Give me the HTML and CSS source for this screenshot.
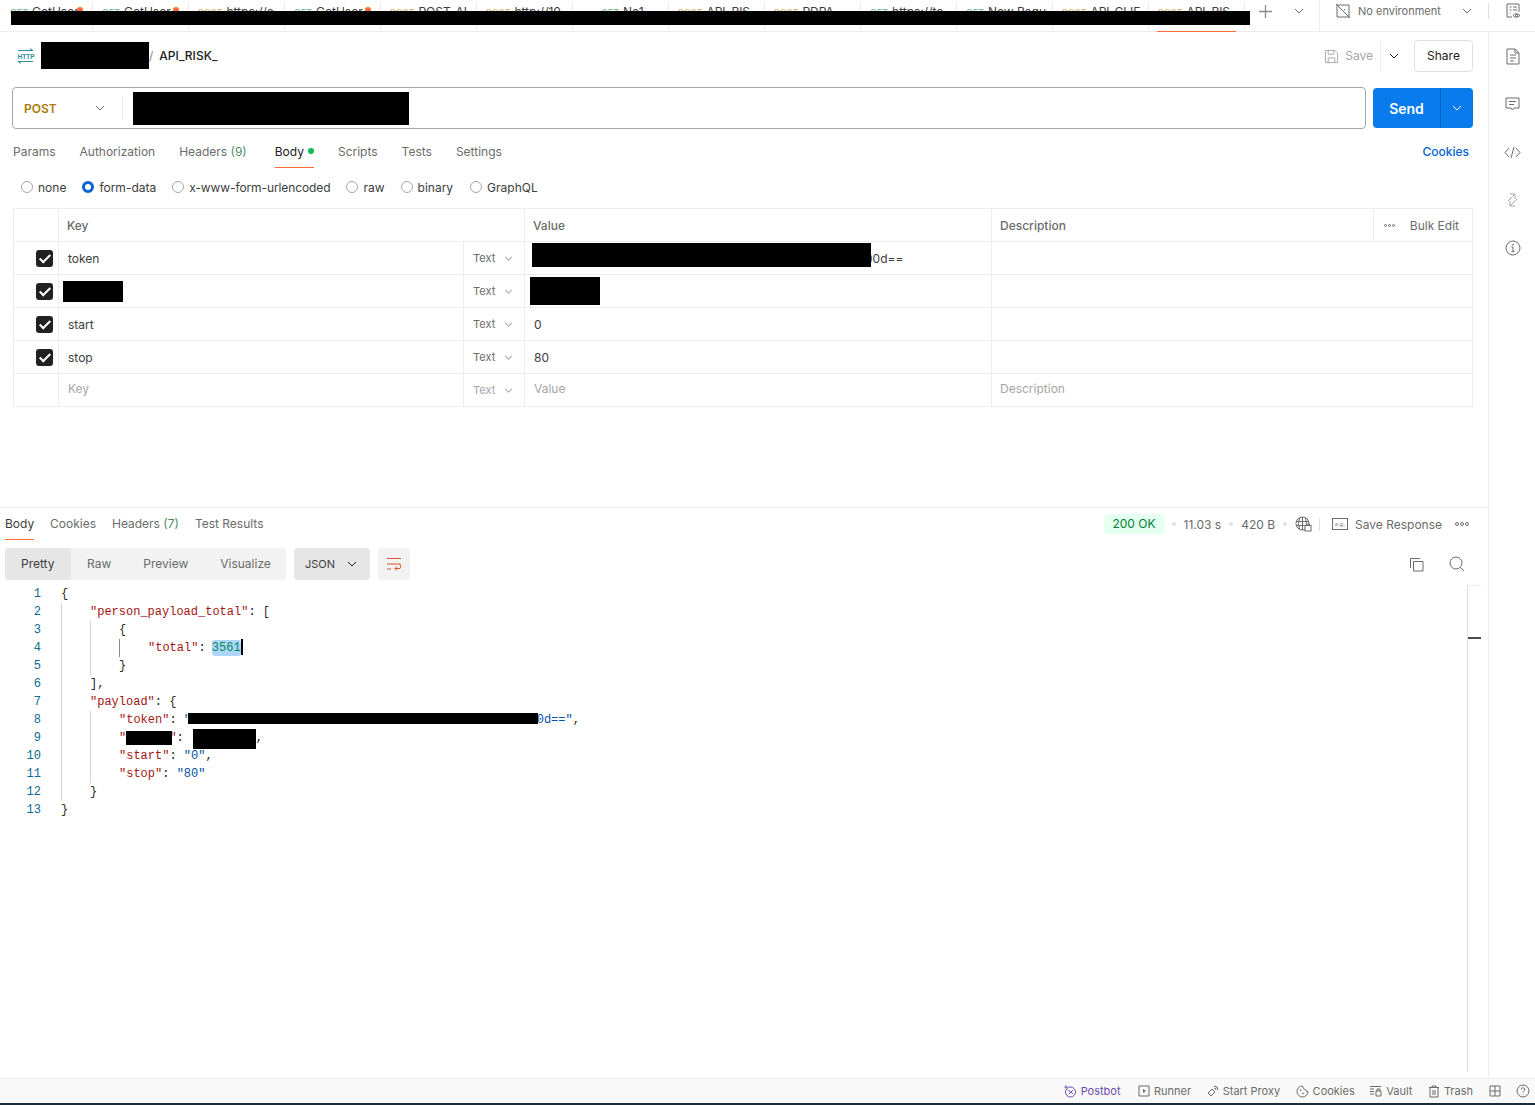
FILE: index.html
```html
<!DOCTYPE html>
<html lang="en">
<head>
    <meta charset="UTF-8">
    <meta name="viewport" content="width=device-width, initial-scale=1.0">
    <title>API_RISK_</title>
    <link rel="stylesheet" href="styles.css">
</head>
<body>
    <div class="topbar">
        <div class="tabs">
            <div class="tab first"><span class="m get">GET</span>GetUser<i class="dot"></i></div>
            <div class="tab"><span class="m get">GET</span>GetUser<i class="dot"></i></div>
            <div class="tab"><span class="m post">POST</span>https://e</div>
            <div class="tab"><span class="m get">GET</span>GetUser<i class="dot"></i></div>
            <div class="tab"><span class="m post">POST</span>POST_AI</div>
            <div class="tab"><span class="m post">POST</span>http://10</div>
            <div class="tab short"><span class="m get">GET</span>No1</div>
            <div class="tab"><span class="m post">POST</span>API_RIS</div>
            <div class="tab"><span class="m post">POST</span>PDPA ...</div>
            <div class="tab"><span class="m get">GET</span>https://tc</div>
            <div class="tab"><span class="m get">GET</span>New Requ</div>
            <div class="tab"><span class="m post">POST</span>API_CLIE</div>
            <div class="tab active"><span class="m post">POST</span>API_RIS</div>
        </div>
        <div class="tab-actions">
            <svg class="plus" width="13" height="13" viewBox="0 0 13 13"><path d="M6.500 0v13M0 6.500h13"/></svg>
            <svg class="chev" width="10" height="6" viewBox="0 0 10 6"><path d="M1 1l4 4 4-4"/></svg>
        </div>
        <div class="env">
            <svg class="ico" width="16" height="16" viewBox="0 0 16 16"><path d="M2 2h12v12H2zM1 1l14 14M6 6l4 4M10 6l-1 1"/></svg>
            <span class="env-name">No environment</span>
            <svg class="chev" width="10" height="6" viewBox="0 0 10 6"><path d="M1 1l4 4 4-4"/></svg>
        </div>
        <div class="env-eye">
            <svg class="ico" width="16" height="16" viewBox="0 0 16 16"><path d="M2 1h12v8M2 1v13h5M4.500 4h2M8 4h4M4.500 7h2M8 7h4M4.500 10h1"/><path d="M8 12.500q3-3.500 7 0q-4 3.500-7 0z"/><circle cx="11.500" cy="12.500" r="1"/></svg>
        </div>
    </div>

    <div class="app">
        <main class="workspace">
            <section class="request">
                <div class="title-row">
                    <div class="crumb">
                        <svg class="http-icon" width="18" height="16" viewBox="0 0 18 16"><path d="M1 2.500h15M13 .5l3 2M1 13.500h15M1 13.500l3 2"/><text x="0.500" y="10.500">HTTP</text></svg>
                        <span class="crumb-sep">/</span>
                        <span class="crumb-name">API_RISK_</span>
                    </div>
                    <div class="save-group">
                        <svg class="ico save-ico" width="15" height="15" viewBox="0 0 16 16"><path d="M1.500 1.500h10l3 3v10h-13zM4.500 1.500v4h6v-4M4.500 14.500v-5h7v5"/></svg>
                        <span class="save-label">Save</span>
                        <span class="save-sep"></span>
                        <svg class="chev dark" width="10" height="6" viewBox="0 0 10 6"><path d="M1 1l4 4 4-4"/></svg>
                        <button class="share">Share</button>
                    </div>
                </div>

                <div class="url-row">
                    <div class="url-box">
                        <div class="method">POST
                            <svg class="chev" width="10" height="6" viewBox="0 0 10 6"><path d="M1 1l4 4 4-4"/></svg>
                        </div>
                    </div>
                    <div class="send">
                        <span class="send-label">Send</span>
                        <span class="send-more"><svg width="10" height="6" viewBox="0 0 10 6"><path d="M1 1l4 4 4-4"/></svg></span>
                    </div>
                </div>

                <div class="req-tabs">
                    <span>Params</span>
                    <span>Authorization</span>
                    <span>Headers <em>(9)</em></span>
                    <span class="current">Body<i class="green-dot"></i></span>
                    <span>Scripts</span>
                    <span>Tests</span>
                    <span>Settings</span>
                    <a class="cookies-link">Cookies</a>
                </div>

                <div class="body-types">
                    <label><i class="radio"></i>none</label>
                    <label><i class="radio on"></i>form-data</label>
                    <label class="urlenc"><i class="radio"></i>x-www-form-urlencoded</label>
                    <label><i class="radio"></i>raw</label>
                    <label class="binary"><i class="radio"></i>binary</label>
                    <label><i class="radio"></i>GraphQL</label>
                </div>

                <div class="params">
                    <div class="p-row p-head">
                        <div class="c-check"></div>
                        <div class="c-key">Key</div>
                        <div class="c-val">Value</div>
                        <div class="c-desc">Description</div>
                        <div class="c-bulk"><span class="dots"><b></b><b></b><b></b></span>Bulk Edit</div>
                    </div>
                    <div class="p-row">
                        <div class="c-check"><span class="check"></span></div>
                        <div class="c-key">token</div>
                        <div class="c-type">Text<svg class="chev" width="9" height="5" viewBox="0 0 10 6"><path d="M1 1l4 4 4-4"/></svg></div>
                        <div class="c-val token-val">00d==</div>
                        <div class="c-desc wide"></div>
                    </div>
                    <div class="p-row">
                        <div class="c-check"><span class="check"></span></div>
                        <div class="c-key"></div>
                        <div class="c-type">Text<svg class="chev" width="9" height="5" viewBox="0 0 10 6"><path d="M1 1l4 4 4-4"/></svg></div>
                        <div class="c-val"></div>
                        <div class="c-desc wide"></div>
                    </div>
                    <div class="p-row">
                        <div class="c-check"><span class="check"></span></div>
                        <div class="c-key">start</div>
                        <div class="c-type">Text<svg class="chev" width="9" height="5" viewBox="0 0 10 6"><path d="M1 1l4 4 4-4"/></svg></div>
                        <div class="c-val">0</div>
                        <div class="c-desc wide"></div>
                    </div>
                    <div class="p-row">
                        <div class="c-check"><span class="check"></span></div>
                        <div class="c-key">stop</div>
                        <div class="c-type">Text<svg class="chev" width="9" height="5" viewBox="0 0 10 6"><path d="M1 1l4 4 4-4"/></svg></div>
                        <div class="c-val">80</div>
                        <div class="c-desc wide"></div>
                    </div>
                    <div class="p-row ghost">
                        <div class="c-check"></div>
                        <div class="c-key">Key</div>
                        <div class="c-type">Text<svg class="chev" width="9" height="5" viewBox="0 0 10 6"><path d="M1 1l4 4 4-4"/></svg></div>
                        <div class="c-val">Value</div>
                        <div class="c-desc wide">Description</div>
                    </div>
                </div>
            </section>

            <section class="response">
                <div class="res-head">
                    <div class="res-tabs">
                        <span class="current">Body</span>
                        <span>Cookies</span>
                        <span>Headers <em>(7)</em></span>
                        <span>Test Results</span>
                    </div>
                    <div class="res-meta">
                        <span class="status">200 OK</span>
                        <i class="sep-dot"></i>
                        <span>11.03 s</span>
                        <i class="sep-dot"></i>
                        <span>420 B</span>
                        <i class="sep-dot"></i>
                        <svg class="ico" width="17" height="16" viewBox="0 0 17 16"><circle cx="7.500" cy="7.500" r="6.500"/><path d="M1 5.500h13M1 9.500h13M7.500 1v13M4.500 2q-2 5.500 0 11M10.500 2q2 5.500 0 11"/><rect class="lock" x="10" y="9.500" width="6" height="5.500"/><path d="M11.500 9.500v-1.500h3v1.500"/></svg>
                        <span class="v-sep"></span>
                        <span class="eg">e.g.</span>
                        <span class="save-res">Save Response</span>
                        <span class="dots"><b></b><b></b><b></b></span>
                    </div>
                </div>

                <div class="res-tools">
                    <div class="views">
                        <span class="current">Pretty</span>
                        <span>Raw</span>
                        <span>Preview</span>
                        <span>Visualize</span>
                    </div>
                    <div class="lang">JSON<svg class="chev dark" width="10" height="6" viewBox="0 0 10 6"><path d="M1 1l4 4 4-4"/></svg></div>
                    <div class="wrap-btn">
                        <svg width="16" height="14" viewBox="0 0 16 14"><path d="M1 1.500h14M1 7h13q1.500 2.500 0 4.500h-5M11 9.500l-2 2 2 2M1 12h4"/></svg>
                    </div>
                    <div class="res-tool-icons">
                        <svg class="ico" width="15" height="15" viewBox="0 0 15 15"><path d="M4.500 4.500h9.500v9.500H4.500zM11 1.500H1.500V11"/></svg>
                        <svg class="ico" width="16" height="16" viewBox="0 0 16 16"><circle cx="7" cy="7" r="6"/><path d="M11.500 11.500l3.500 3.500"/></svg>
                    </div>
                </div>

                <div class="editor">
                    <div class="code">
                        <div class="ln"><span class="n">1</span><span class="t"><span class="br">{</span></span></div>
                        <div class="ln"><span class="n">2</span><span class="t g1"><span class="k">"person_payload_total"</span>: <span class="br">[</span></span></div>
                        <div class="ln"><span class="n">3</span><span class="t g2"><span class="br">{</span></span></div>
                        <div class="ln"><span class="n">4</span><span class="t g3"><span class="k">"total"</span>: <span class="sel">3561</span><span class="caret"></span></span></div>
                        <div class="ln"><span class="n">5</span><span class="t g2"><span class="br">}</span></span></div>
                        <div class="ln"><span class="n">6</span><span class="t g1"><span class="br">]</span>,</span></div>
                        <div class="ln"><span class="n">7</span><span class="t g1"><span class="k">"payload"</span>: <span class="br">{</span></span></div>
                        <div class="ln"><span class="n">8</span><span class="t g2"><span class="k">"token"</span>: <span class="s">"<span class="gap-token"></span>0d=="</span>,</span></div>
                        <div class="ln"><span class="n">9</span><span class="t g2"><span class="k">"<span class="gap-key"></span>"</span>: <span class="gap-val"></span>,</span></div>
                        <div class="ln"><span class="n">10</span><span class="t g2"><span class="k">"start"</span>: <span class="s">"0"</span>,</span></div>
                        <div class="ln"><span class="n">11</span><span class="t g2"><span class="k">"stop"</span>: <span class="s">"80"</span></span></div>
                        <div class="ln"><span class="n">12</span><span class="t g1"><span class="br">}</span></span></div>
                        <div class="ln"><span class="n">13</span><span class="t"><span class="br">}</span></span></div>
                    </div>
                    <div class="minimap"><i></i></div>
                </div>
            </section>
        </main>

        <aside class="rail">
            <div class="rail-btn"><svg class="ico" width="14" height="17" viewBox="0 0 14 17"><path d="M1 1h8l4 4v11H1zM9 1v4h4M4 7h6M4 10h6M4 13h4"/></svg></div>
            <div class="rail-btn"><svg class="ico" width="15" height="15" viewBox="0 0 15 15"><path d="M1 1h13v10H9l-1.500 2L6 11H1zM4 4.500h7M4 7.500h5"/></svg></div>
            <div class="rail-btn"><svg class="ico" width="17" height="13" viewBox="0 0 17 13"><path d="M5 2L1 6.500 5 11M12 2l4 4.500-4 4.500M10 1L7 12"/></svg></div>
            <div class="rail-btn"><svg class="ico faint" width="13" height="14" viewBox="0 0 13 14"><path d="M4 1h5v5M9 1L2 8M9 13H4V8M4 13l7-7"/></svg></div>
            <div class="rail-btn"><svg class="ico" width="16" height="16" viewBox="0 0 16 16"><circle cx="8" cy="8" r="7"/><path d="M8 7v4.500M6.500 11.500h3M6.500 7H8"/><circle cx="8" cy="4.700" r=".5"/></svg></div>
        </aside>
    </div>

    <footer class="statusbar">
        <span class="postbot"><svg width="13" height="13" viewBox="0 0 13 13"><circle cx="6.500" cy="7" r="5"/><path d="M4 5l5 4M9 5L5 9"/><circle cx="2" cy="2" r="1"/></svg>Postbot</span>
        <span><svg class="ico" width="12" height="12" viewBox="0 0 12 12"><path d="M1 1h10v10H1z"/><path class="fill" d="M5 4l3 2-3 2z"/></svg>Runner</span>
        <span><svg class="ico" width="12" height="12" viewBox="0 0 12 12"><path d="M1 8l4-4 3 3-4 4zM7 3q2 0 2 2M7 1q4 0 4 4"/></svg>Start Proxy</span>
        <span><svg class="ico" width="13" height="13" viewBox="0 0 13 13"><path d="M6.500 1a5.500 5.500 0 1 0 5.500 5.500q-2.500 0-2.500-2Q7 4.500 6.500 1z"/><circle cx="4.500" cy="5" r=".5"/><circle cx="7" cy="8.500" r=".5"/></svg>Cookies</span>
        <span><svg class="ico" width="12" height="12" viewBox="0 0 12 12"><path d="M0 1.500h11M0 4h4M0 6.500h4M0 9h4M6 6h5v5H6zM7 6V4h3v2"/></svg>Vault</span>
        <span><svg class="ico" width="12" height="13" viewBox="0 0 12 13"><path d="M1 2.500h10M4 2.500V1h4v1.500M2 2.500V12h8V2.500M5 5v5M7 5v5"/></svg>Trash</span>
        <svg class="ico" width="12" height="12" viewBox="0 0 12 12"><path d="M1 1h10v10H1zM6 1v10M1 6h10"/></svg>
        <svg class="ico" width="14" height="14" viewBox="0 0 14 14"><circle cx="7" cy="7" r="6"/><path d="M5.300 5.500a1.700 1.700 0 1 1 2.500 1.500Q7 7.500 7 8.500M7 10v.500"/></svg>
    </footer>
    <div class="os-edge"></div>

    <!-- redacted in the original capture -->
    <div class="redact r-tabs"></div>
    <div class="redact r-crumb"></div>
    <div class="redact r-url"></div>
    <div class="redact r-token"></div>
    <div class="redact r-key2"></div>
    <div class="redact r-val2"></div>
    <div class="redact r-code-token"></div>
    <div class="redact r-code-key"></div>
    <div class="redact r-code-val"></div>
</body>
</html>
```

FILE: styles.css
```css
* { box-sizing: border-box; }
html, body { margin: 0; height: 100%; }
body { position: relative; height: 1105px; overflow: hidden; background: #fff; color: #212121; font-family: Inter, "Noto Sans", sans-serif; font-size: 12px; display: flex; flex-direction: column; }
svg { fill: none; stroke: #6b6b6b; stroke-width: 1; flex: none; }
.ico { stroke: #6b6b6b; }
.ico .fill { fill: #6b6b6b; stroke: none; }
.ico .lock { fill: #fff; }
.ico.faint { stroke: #a6a6a6; }
.chev { stroke: #6b6b6b; }
.chev.dark { stroke: #212121; }

/* top tabs */
.topbar { height: 32px; flex: none; display: flex; border-bottom: 1px solid #ededed; }
.tabs { display: flex; width: 1244px; margin-left: 1px; }
.tab { width: 96px; flex: none; height: 28px; margin-top: 3px; padding: 1px 0 0 9px; border-right: 1px solid #ededed; white-space: nowrap; color: #3d3d3d; font-size: 12px; position: relative; }
.tab.first { width: 92px; }
.tab.short { padding-left: 28px; }
.tab .m { font-size: 9px; font-weight: 500; margin-right: 4px; }
.m.get { color: #007f31; opacity: .5; }
.m.post { color: #ad7a03; opacity: .5; }
.tab .dot { position: absolute; right: 9px; top: 4px; width: 6px; height: 6px; border-radius: 50%; background: #ff6c37; }
.tab.active::after { content: ""; position: absolute; left: 8px; bottom: -1px; width: 79px; height: 1px; background: #ff6c37; }
.tab-actions { width: 74px; display: flex; align-items: center; gap: 22px; padding: 0 0 9px 14px; }
.plus { stroke: #8a8a8a; stroke-width: 1.300; }
.env { width: 169px; display: flex; align-items: center; border-left: 1px solid #ededed; padding: 0 0 9px 15px; }
.env-name { margin-left: 7px; width: 104px; color: #6b6b6b; font-size: 11px; }
.env-eye { flex: 1; display: flex; align-items: center; justify-content: center; padding: 0 0 9px 3px; position: relative; }
.env-eye::before { content: ""; position: absolute; left: 0; top: 3px; height: 16px; width: 1px; background: #e0e0e0; }

.app { flex: 1; display: flex; min-height: 0; }
.workspace { flex: 1; min-width: 0; display: flex; flex-direction: column; }
.rail { width: 47px; flex: none; border-left: 1px solid #ededed; display: flex; flex-direction: column; padding-left: 1px; }
.rail-btn { height: 48px; display: flex; align-items: center; justify-content: center; }

/* request */
.request { height: 476px; flex: none; padding: 0 15px 0 12px; border-bottom: 1px solid #ededed; }
.title-row { height: 55px; display: flex; align-items: flex-start; justify-content: space-between; padding: 8px 0 0 5px; }
.crumb { display: flex; align-items: center; height: 32px; }
.http-icon { stroke: #2f8f9f; }
.http-icon text { font-family: "Liberation Sans", sans-serif; font-size: 6.500px; font-weight: 700; fill: #2f8f9f; stroke: none; }
.crumb-sep { margin-left: 114px; color: #8a8a8a; margin-bottom: 2px; }
.crumb-name { margin-left: 6px; font-weight: 500; font-size: 12px; margin-bottom: 2px; }
.save-group { display: flex; align-items: center; height: 32px; }
.save-ico { stroke: #a6a6a6; }
.save-label { color: #a6a6a6; margin: 0 0 2px 6px; }
.save-sep { width: 1px; height: 32px; background: #ededed; margin-left: 7px; margin-right: 8px; }
.share { margin-left: 15px; width: 59px; height: 32px; padding: 0 0 2px; background: #fff; border: 1px solid #e0e0e0; border-radius: 4px; font: 12px Inter, sans-serif; color: #212121; }
.url-row { display: flex; gap: 7px; height: 42px; }
.url-box { flex: 1; border: 1px solid #a6a6a6; border-radius: 4px; display: flex; align-items: center; }
.method { width: 110px; height: 24px; border-right: 1px solid #ededed; display: flex; align-items: center; justify-content: space-between; padding: 0 17px 0 11px; color: #ad7a03; font-weight: 600; font-size: 12px; }
.send { width: 100px; height: 40px; margin-top: 1px; background: #097bed; border-radius: 4px; display: flex; color: #fff; font-weight: 600; font-size: 14px; align-items: center; }
.send-label { width: 67px; text-align: center; }
.send-more { flex: 1; height: 40px; border-left: 1px solid #0667c9; display: flex; align-items: center; justify-content: center; }
.send-more svg { stroke: #fff; }
.req-tabs { height: 39px; display: flex; align-items: flex-start; gap: 24px; padding: 15px 4px 0 1px; color: #6b6b6b; }
.req-tabs span { height: 24px; position: relative; }
.req-tabs em, .res-tabs em { font-style: normal; color: #4e8a68; }
.req-tabs .current { color: #212121; display: flex; gap: 4px; border-bottom: 1px solid #ff6c37; height: 24px; margin-left: 4px; }
.green-dot { width: 6px; height: 6px; margin-top: 4px; border-radius: 50%; background: #0cbb52; }
.cookies-link { margin-left: auto; color: #0265d2; font-weight: 500; }
.body-types { height: 40px; display: flex; align-items: center; gap: 16px; padding: 0 0 2px 9px; color: #3d3d3d; }
.body-types label { display: flex; align-items: center; gap: 5px; }
.body-types .urlenc { letter-spacing: -.1px; }
.body-types .binary { margin-right: 1px; }
.radio { width: 12px; height: 12px; border-radius: 50%; border: 1px solid #a6a6a6; background: #fff; }
.radio.on { border: 3px solid #0265d2; }

.params { border: 1px solid #ededed; border-bottom: 0; margin-left: 1px; }
.p-row { display: flex; height: 33px; border-bottom: 1px solid #ededed; align-items: stretch; }
.p-row > div { display: flex; align-items: center; }
.p-head { font-weight: 500; color: #6b6b6b; }
.c-check { width: 45px; border-right: 1px solid #ededed; justify-content: flex-end; padding-right: 5px; }
.c-key { width: 404px; padding-left: 9px; color: #3d3d3d; }
.c-type { width: 61px; border-left: 1px solid #ededed; padding-left: 9px; color: #6b6b6b; font-size: 11px; gap: 9px; }
.c-val { width: 467px; padding-left: 9px; border-left: 1px solid #ededed; color: #3d3d3d; }
.p-head .c-key { width: 465px; color: #6b6b6b; padding-left: 8px; }
.p-head .c-val { color: #6b6b6b; padding-left: 8px; }
.c-desc { width: 382px; padding-left: 8px; border-left: 1px solid #ededed; }
.c-desc.wide { flex: 1; }
.c-bulk { flex: 1; border-left: 1px solid #ededed; color: #6b6b6b; font-weight: 400; justify-content: flex-end; padding-right: 13px; gap: 15px; }
.c-bulk .dots b { width: 3px; height: 3px; }
.token-val { justify-content: flex-start; padding-left: 340px; }
.check { width: 17px; height: 17px; background: #212121; border-radius: 3px; position: relative; }
.check::after { content: ""; position: absolute; left: 6px; top: 2px; width: 4px; height: 9px; border: solid #fff; border-width: 0 2px 2px 0; transform: rotate(45deg); }
.ghost > div { color: #a6a6a6; }
.ghost .c-key, .ghost .c-val, .ghost .c-desc { padding-bottom: 3px; }
.dots { display: inline-flex; gap: 1px; }
.dots b { width: 4px; height: 4px; border: 1px solid #6b6b6b; border-radius: 50%; }

/* response */
.response { flex: 1; min-height: 0; display: flex; flex-direction: column; }
.res-head { height: 38px; display: flex; justify-content: space-between; align-items: flex-start; padding-left: 5px; }
.res-tabs { display: flex; gap: 16px; color: #6b6b6b; padding-top: 8px; }
.res-tabs span { height: 24px; }
.res-tabs .current { color: #3d3d3d; border-bottom: 1px solid #ff6c37; width: 29px; }
.res-meta { display: flex; align-items: center; height: 20px; margin-top: 6px; color: #6b6b6b; padding-right: 19px; }
.status { background: #e5fff1; color: #007f31; padding: 0 8px; height: 20px; line-height: 20px; border-radius: 4px; }
.sep-dot { width: 4px; height: 4px; border-radius: 50%; background: #e0e0e0; margin: 0 8px; }
.v-sep { width: 1px; height: 13px; background: #e0e0e0; margin: 0 12px 0 7px; }
.eg { border: 1px solid #6b6b6b; font-size: 7px; width: 16px; height: 12px; line-height: 10px; text-align: center; font-family: "Liberation Serif", serif; margin-right: 7px; }
.save-res { margin-right: 13px; }
.res-tools { height: 32px; margin-top: 2px; display: flex; padding-left: 5px; }
.views { width: 281px; height: 32px; display: flex; background: #f2f2f2; border-radius: 4px; color: #6b6b6b; }
.views span { padding: 0 16px; line-height: 32px; }
.views .current { background: #e6e6e6; color: #3d3d3d; border-radius: 4px 0 0 4px; padding-right: 16.500px; }
.lang { width: 76px; height: 32px; margin-left: 8px; background: #e6e6e6; border-radius: 4px; display: flex; align-items: center; justify-content: space-between; padding: 0 13px 0 11px; color: #3d3d3d; font-size: 11px; }
.wrap-btn { width: 32px; height: 32px; margin-left: 8px; background: #f2f2f2; border-radius: 4px; display: flex; align-items: center; justify-content: center; }
.wrap-btn svg { stroke: #d4552a; }
.res-tool-icons { margin-left: auto; display: flex; align-items: center; gap: 25px; padding-right: 23px; }

.editor { flex: 1; min-height: 0; margin-top: 5px; display: flex; }
.code { flex: 1; font-family: "Liberation Mono", "DejaVu Sans Mono", monospace; font-size: 12px; color: #212121; }
.ln { height: 18px; line-height: 18px; display: flex; white-space: pre; }
.n { width: 41px; text-align: right; color: #0b6a8f; flex: none; }
.t { margin-left: 20px; }
.t.g1 { padding-left: 29px; background: linear-gradient(#d4d4d4, #d4d4d4) 0 0 / 1px 100% no-repeat; }
.t.g2 { padding-left: 58px; background: linear-gradient(#d4d4d4, #d4d4d4) 0 0 / 1px 100% no-repeat, linear-gradient(#d4d4d4, #d4d4d4) 29px 0 / 1px 100% no-repeat; }
.t.g3 { padding-left: 87px; background: linear-gradient(#d4d4d4, #d4d4d4) 0 0 / 1px 100% no-repeat, linear-gradient(#d4d4d4, #d4d4d4) 29px 0 / 1px 100% no-repeat, linear-gradient(#8a8a8a, #8a8a8a) 58px 0 / 1px 100% no-repeat; }
.k { color: #a31515; }
.s { color: #0451a5; }
.br { color: #2a2a1a; }
.sel { background: #add6ff; color: #098658; border-radius: 3px; padding: 1px 0; margin-left: -1px; }
.caret { display: inline-block; width: 2px; height: 16px; background: #000; vertical-align: -4px; }
.gap-token { display: inline-block; width: 48ch; }
.gap-key { display: inline-block; width: 6ch; }
.gap-val { display: inline-block; width: 9ch; }
.minimap { width: 14px; margin: 0 7px 6px 0; border-left: 1px solid #e0e0e0; border-top: 1px solid #ededed; position: relative; flex: none; }
.minimap i { position: absolute; left: 0; top: 51px; width: 13px; height: 2px; background: #4d4d4d; }

/* footer */
.statusbar { height: 25px; flex: none; border-top: 1px solid #ededed; background: #f9f9f9; display: flex; align-items: center; justify-content: flex-end; gap: 15.500px; padding-right: 5px; color: #6b6b6b; font-size: 11px; }
.statusbar span { display: flex; align-items: center; gap: 4px; }
.statusbar .postbot { color: #6e4bb3; margin-right: 2px; }
.postbot svg { stroke: #6e4bb3; }
.os-edge { height: 2px; flex: none; background: #1c2b3a; }

/* black boxes sitting over the page */
.redact { position: absolute; background: #000; }
.r-tabs { left: 11px; top: 11px; width: 1239px; height: 14px; }
.r-crumb { left: 41px; top: 42px; width: 108px; height: 27px; }
.r-url { left: 133px; top: 92px; width: 276px; height: 33px; }
.r-token { left: 532px; top: 243px; width: 339px; height: 24px; }
.r-key2 { left: 63px; top: 281px; width: 60px; height: 21px; }
.r-val2 { left: 530px; top: 277px; width: 70px; height: 28px; }
.r-code-token { left: 188px; top: 713px; width: 350px; height: 11px; }
.r-code-key { left: 126px; top: 731px; width: 46px; height: 14px; }
.r-code-val { left: 193px; top: 729px; width: 63px; height: 20px; }
```
